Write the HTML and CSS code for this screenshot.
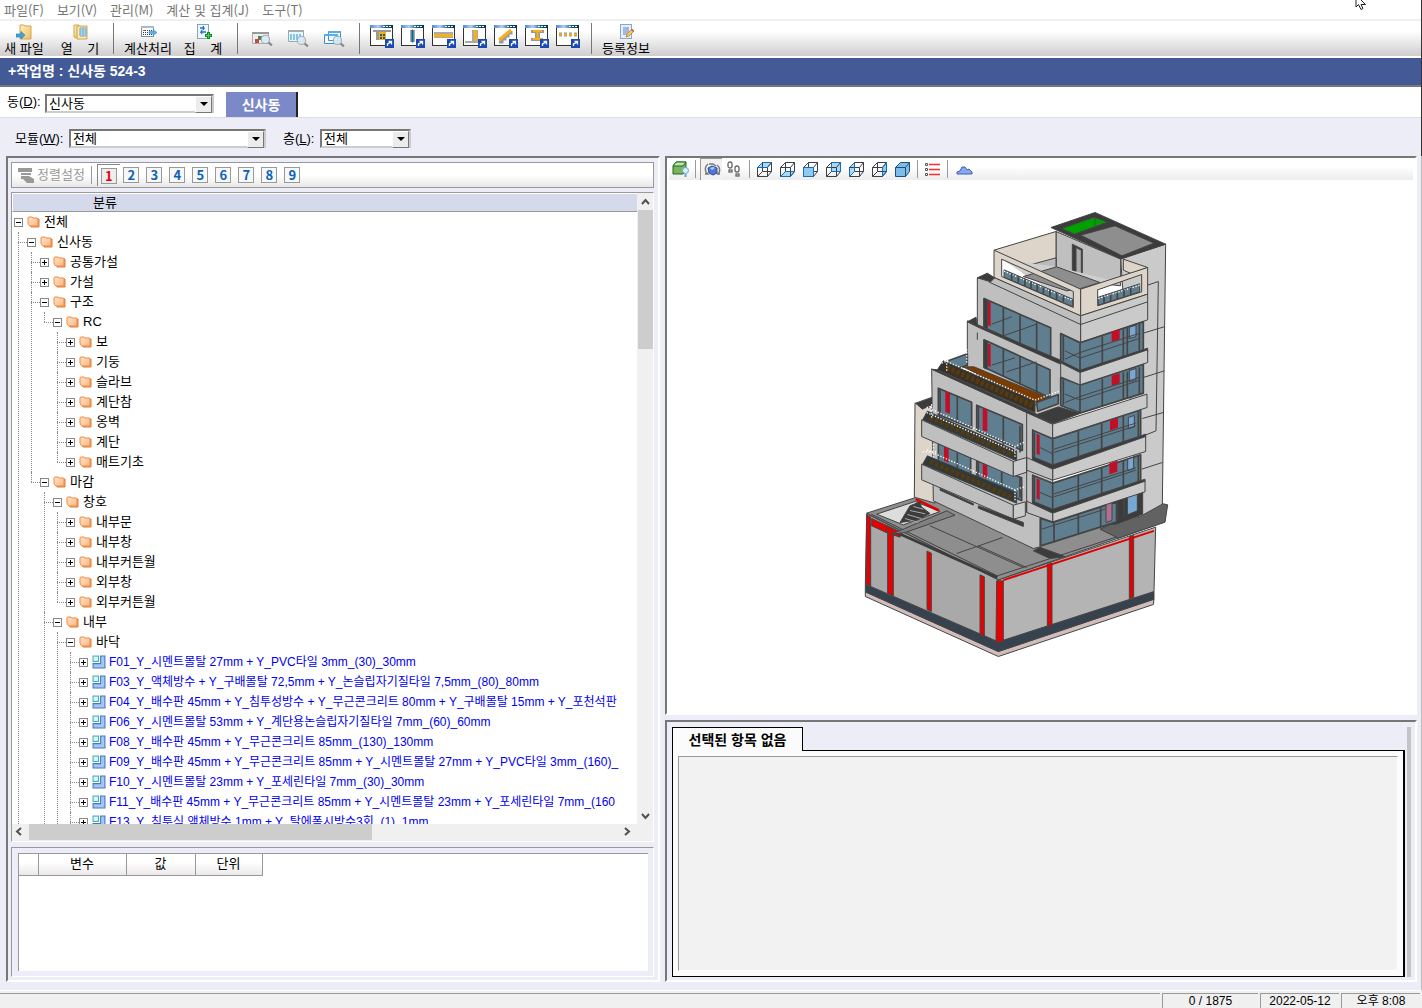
FILE: index.html
```html
<!DOCTYPE html>
<html lang="ko">
<head>
<meta charset="utf-8">
<title>신사동 524-3</title>
<link rel="stylesheet" href="styles.css">
</head>
<body>
<svg class="defs" aria-hidden="true">
  <defs>
    <linearGradient id="gFolder" x1="0" y1="0" x2="1" y2="1"><stop offset="0" stop-color="#ffe3cc"/><stop offset="1" stop-color="#fbb884"/></linearGradient>
    <linearGradient id="gYellow" x1="0" y1="0" x2="1" y2="1"><stop offset="0" stop-color="#fff0c0"/><stop offset="1" stop-color="#ecc068"/></linearGradient>
    <linearGradient id="gCap" x1="0" x2="1"><stop offset="0" stop-color="#4f86d8"/><stop offset=".35" stop-color="#b4cdf2"/><stop offset=".7" stop-color="#0d5878"/><stop offset="1" stop-color="#063346"/></linearGradient>
    <symbol id="folder" viewBox="0 0 14 14"><path d="M3 4h9v8H4z" fill="#f5a56a" stroke="#dc7d3a"/><path d="M1 3q0-1 1-1h3l1 1h4q1 0 1 1v7H3Q1 10 1 8z" fill="url(#gFolder)" stroke="#f08b40"/></symbol>
    <symbol id="part" viewBox="0 0 13 13"><path d="M8 1h4v11H1V8h7z" fill="#a9c6f2" stroke="#3f78c4"/><rect x="1" y="1" width="5" height="5" fill="#dff6f6" stroke="#3fb3bd"/></symbol>
    <symbol id="lens" viewBox="0 0 12 12"><path d="M7 7l4 3.500" stroke="#888" stroke-width="2"/><circle cx="5" cy="5" r="3.800" fill="#d8eaf4" fill-opacity=".9" stroke="#a5acb2"/></symbol>
    <symbol id="win" viewBox="0 0 24 24"><rect x=".5" y="1.500" width="22" height="20" fill="#fff" stroke="#333"/><rect x="0" y="1" width="23" height="3" fill="url(#gCap)"/><path d="M13 2.500h2m1 0h2m1 0h2" stroke="#fff"/></symbol>
    <symbol id="link" viewBox="0 0 9 9"><rect width="9" height="9" fill="#1b49b5"/><path d="M2.500 7V5l4-2M3.500 2.500h3v3" fill="none" stroke="#fff" stroke-width="1.300"/></symbol>
    <symbol id="cube" viewBox="0 0 17 17"><path d="M1.500 6.500h10v9h-10zM6.500 1.500h9v9h-9zM1.500 6.500l5-5M11.500 6.500l4-5M11.500 15.500l4-5M1.500 15.500l5-5" fill="none" stroke="#3a3f45"/></symbol>
  </defs>
</svg>
<div class="app">
  <header class="top">
    <nav class="menu">
      <a href="#">파일(F)</a><a href="#">보기(V)</a><a href="#">관리(M)</a><a href="#">계산 및 집계(J)</a><a href="#">도구(T)</a>
      <svg class="cursor" width="14" height="11" viewBox="0 0 14 11"><path d="M1 0v7l2.500-2.500L6 9.500l2-1-2-4h4.500L6 0" fill="#fff" stroke="#222"/></svg>
    </nav>
    <div class="toolbar">
      <button class="tool w40"><svg width="17" height="18" viewBox="0 0 17 18"><path d="M4 2h4l1 1h6v13H4z" fill="url(#gYellow)" stroke="#d1a44e"/><path d="M0 11h5V8.500l4 3.800-4 3.700v-2H0z" fill="#43a5e0" stroke="#1d74b5" stroke-width=".6"/></svg>새 파일</button>
      <button class="tool w40 second"><svg width="17" height="18" viewBox="0 0 17 18"><path d="M2 2h5v14l-5-2z" fill="url(#gYellow)" stroke="#d1a44e"/><path d="M5 3h10v13H5z" fill="#ffe7a8" stroke="#d1a44e"/><path d="M8 5h6v8H8z" fill="#fff" stroke="#63a8cf"/><path d="M8 7h6M8 9h6M8 11h6M11 5v8" stroke="#63a8cf"/></svg><span>열&nbsp;&nbsp;&nbsp;&nbsp;기</span></button>
      <i class="sep s-file"></i>
      <button class="tool w48"><svg width="17" height="18" viewBox="0 0 17 18"><rect x="1.500" y="3.500" width="12" height="10" fill="#fff" stroke="#8493a0"/><rect x="1" y="3" width="13" height="2" fill="#a8bccb"/><path d="M3 7.500h9M3 9.500h9M3 11.500h9" stroke="#2d3d58" stroke-dasharray="1 1"/><path d="M3 7.500h2" stroke="#e33"/><path d="M9 8.500h4V6.500l4 3-4 3v-2H9z" fill="#55b2ea" stroke="#2680bd" stroke-width=".5"/></svg>계산처리</button>
      <button class="tool w48 last"><svg width="17" height="18" viewBox="0 0 17 18"><rect x="2.500" y="1.500" width="11" height="14" fill="#f1f7fc" stroke="#87a4bd"/><path d="M5 5h4L8 3m1 2L8 7M11 9H6l1-2M6 9l1 2" fill="none" stroke="#1f6fd0" stroke-width="1.300"/><path d="M10 12.500h7M13.500 9v7" stroke="#108a24" stroke-width="3"/><path d="M11 12.500h5M13.500 10v5" stroke="#4bd355"/></svg><span>집&nbsp;&nbsp;&nbsp;&nbsp;계</span></button>
      <i class="sep s-calc"></i>
      <button class="pic"><svg width="21" height="20" viewBox="0 0 21 20"><path d="M.5 4.500h16v11H.5z" fill="#eee" stroke="#aaa"/><path d="M0 4h17v2H0z" fill="#999"/><path d="M6 8h4v4H6z" fill="#3e8a50"/><path d="M3 11h4v4H3z" fill="#c44"/><use href="#lens" x="8" y="6" width="13" height="13"/></svg></button>
      <button class="pic"><svg width="21" height="20" viewBox="0 0 21 20"><path d="M.5 2.500h15v11H.5z" fill="#eaf6fc" stroke="#9aa"/><path d="M0 2h16v2H0z" fill="#aaa"/><path d="M2 7h12M2 9h12M2 11h10" stroke="#55b9e6" stroke-width="1.500" stroke-dasharray="2 1"/><use href="#lens" x="8" y="7" width="13" height="13"/></svg></button>
      <button class="pic"><svg width="21" height="20" viewBox="0 0 21 20"><path d="M4.500 3.500h12v9h-12zM.5 6.500h13v9H.5z" fill="#f3f9fd" stroke="#4190c5"/><path d="M4 3h13v2H4zM0 6h14v2H0z" fill="#55b0e4"/><use href="#lens" x="8" y="7" width="13" height="13"/></svg></button>
      <i class="sep s-find"></i>
      <button class="shape"><svg width="24" height="24"><use href="#win"/><path d="M3 6h18v2H3zM6 8h3v8H6z" fill="#999"/><path d="M9 8h7v8H9z" fill="#f9b018"/><path d="M10 10h2v2h-2zM13 10h2v2h-2zM10 13h2v2h-2zM13 13h2v2h-2z" fill="#17606e"/><use href="#link" x="15" y="15" width="9" height="9"/></svg></button>
      <button class="shape"><svg width="24" height="24"><use href="#win"/><path d="M9 6h5v12H9z" fill="#aaa"/><path d="M11 6h1v12h-1z" fill="#046b96" stroke="#046b96"/><use href="#link" x="15" y="15" width="9" height="9"/></svg></button>
      <button class="shape"><svg width="24" height="24"><use href="#win"/><path d="M2 8h19v6H2z" fill="#aaa"/><path d="M2 10h19v3H2z" fill="#f9b018"/><use href="#link" x="15" y="15" width="9" height="9"/></svg></button>
      <button class="shape"><svg width="24" height="24"><use href="#win"/><path d="M2 17h15v2H2zM9 6h6v11H9z" fill="#aaa"/><path d="M11 6h3v11h-3z" fill="#f9b018"/><use href="#link" x="15" y="15" width="9" height="9"/></svg></button>
      <button class="shape"><svg width="24" height="24"><use href="#win"/><path d="M5 18h3v-3h3v-3h3V9h3V7" stroke="#999" stroke-width="3" fill="none"/><path d="M5 16L17 6" stroke="#f9b018" stroke-width="3"/><use href="#link" x="15" y="15" width="9" height="9"/></svg></button>
      <button class="shape"><svg width="24" height="24"><use href="#win"/><path d="M6 6h13v3h-4v5h3v3H6v-3h4V9H6z" fill="#999"/><path d="M8 7h9M8 15h9M12.500 7v8" stroke="#f9b018" stroke-width="2"/><use href="#link" x="15" y="15" width="9" height="9"/></svg></button>
      <button class="shape"><svg width="24" height="24"><use href="#win"/><path d="M3 10.500h18" stroke="#999" stroke-width="4" stroke-dasharray="3 2"/><path d="M3 10.500h18" stroke="#f9b018" stroke-width="2" stroke-dasharray="3 2"/><use href="#link" x="15" y="15" width="9" height="9"/></svg></button>
      <i class="sep s-shape"></i>
      <button class="tool w48"><svg width="17" height="18" viewBox="0 0 17 18"><rect x="2.500" y="1.500" width="11" height="14" fill="#e4effa" stroke="#8aa9c8"/><path d="M5 5h6M5 7h6M5 9h6M5 11h4" stroke="#5a82c4"/><path d="M8 14l1-3 5-5 2 2-5 5z" fill="#f5c95a" stroke="#9c7a30" stroke-width=".7"/><path d="M13 7l2 2 1-1-2-2z" fill="#e44"/></svg>등록정보</button>
    </div>
    <h1 class="title">+작업명 : 신사동 524-3</h1>
    <div class="siteRow">
      <label for="dong">동(<u>D</u>):</label>
      <span class="combo"><select id="dong" class="w169"><option>신사동</option></select></span>
      <button class="siteTab">신사동</button>
    </div>
    <div class="filterRow">
      <label for="module">모듈(<u>W</u>):</label>
      <span class="combo"><select id="module" class="w197"><option>전체</option></select></span>
      <label for="level" class="gapL">층(<u>L</u>):</label>
      <span class="combo"><select id="level" class="w91"><option>전체</option></select></span>
    </div>
  </header>

  <main class="work">
    <section class="panel left">
      <div class="levels">
        <button class="sort" disabled><svg width="17" height="17" viewBox="0 0 17 17"><path d="M0 1h14v4H0zM3 6h10v2H3zM6 9h5l5 3v4H9l-4-4H3V9z" fill="#999"/></svg>정렬설정</button>
        <i class="bar"></i>
        <button class="num on"><b>1</b></button><button class="num"><b>2</b></button><button class="num"><b>3</b></button><button class="num"><b>4</b></button><button class="num"><b>5</b></button><button class="num"><b>6</b></button><button class="num"><b>7</b></button><button class="num"><b>8</b></button><button class="num"><b>9</b></button>
      </div>
      <div class="treeBox">
        <div class="treeHead">분류</div>
        <div class="tree">
          <ul>
            <li><div class="row"><i class="ex minus"></i><svg class="ico"><use href="#folder"/></svg>전체</div>
              <ul>
                <li class="continues"><div class="row"><i class="ex minus"></i><svg class="ico"><use href="#folder"/></svg>신사동</div>
                  <ul>
                    <li><div class="row"><i class="ex"></i><svg class="ico"><use href="#folder"/></svg>공통가설</div></li>
                    <li><div class="row"><i class="ex"></i><svg class="ico"><use href="#folder"/></svg>가설</div></li>
                    <li><div class="row"><i class="ex minus"></i><svg class="ico"><use href="#folder"/></svg>구조</div>
                      <ul>
                        <li><div class="row"><i class="ex minus"></i><svg class="ico"><use href="#folder"/></svg>RC</div>
                          <ul>
                            <li><div class="row"><i class="ex"></i><svg class="ico"><use href="#folder"/></svg>보</div></li>
                            <li><div class="row"><i class="ex"></i><svg class="ico"><use href="#folder"/></svg>기둥</div></li>
                            <li><div class="row"><i class="ex"></i><svg class="ico"><use href="#folder"/></svg>슬라브</div></li>
                            <li><div class="row"><i class="ex"></i><svg class="ico"><use href="#folder"/></svg>계단참</div></li>
                            <li><div class="row"><i class="ex"></i><svg class="ico"><use href="#folder"/></svg>옹벽</div></li>
                            <li><div class="row"><i class="ex"></i><svg class="ico"><use href="#folder"/></svg>계단</div></li>
                            <li><div class="row"><i class="ex"></i><svg class="ico"><use href="#folder"/></svg>매트기초</div></li>
                          </ul>
                        </li>
                      </ul>
                    </li>
                    <li><div class="row"><i class="ex minus"></i><svg class="ico"><use href="#folder"/></svg>마감</div>
                      <ul>
                        <li><div class="row"><i class="ex minus"></i><svg class="ico"><use href="#folder"/></svg>창호</div>
                          <ul>
                            <li><div class="row"><i class="ex"></i><svg class="ico"><use href="#folder"/></svg>내부문</div></li>
                            <li><div class="row"><i class="ex"></i><svg class="ico"><use href="#folder"/></svg>내부창</div></li>
                            <li><div class="row"><i class="ex"></i><svg class="ico"><use href="#folder"/></svg>내부커튼월</div></li>
                            <li><div class="row"><i class="ex"></i><svg class="ico"><use href="#folder"/></svg>외부창</div></li>
                            <li><div class="row"><i class="ex"></i><svg class="ico"><use href="#folder"/></svg>외부커튼월</div></li>
                          </ul>
                        </li>
                        <li class="continues"><div class="row"><i class="ex minus"></i><svg class="ico"><use href="#folder"/></svg>내부</div>
                          <ul>
                            <li class="continues"><div class="row"><i class="ex minus"></i><svg class="ico"><use href="#folder"/></svg>바닥</div>
                              <ul class="items">
                                <li><div class="row"><i class="ex"></i><svg class="ico"><use href="#part"/></svg>F01_Y_시멘트몰탈 27mm + Y_PVC타일 3mm_(30)_30mm</div></li>
                                <li><div class="row"><i class="ex"></i><svg class="ico"><use href="#part"/></svg>F03_Y_액체방수 + Y_구배몰탈 72,5mm + Y_논슬립자기질타일 7,5mm_(80)_80mm</div></li>
                                <li><div class="row"><i class="ex"></i><svg class="ico"><use href="#part"/></svg>F04_Y_배수판 45mm + Y_침투성방수 + Y_무근콘크리트 80mm + Y_구배몰탈 15mm + Y_포천석판</div></li>
                                <li><div class="row"><i class="ex"></i><svg class="ico"><use href="#part"/></svg>F06_Y_시멘트몰탈 53mm + Y_계단용논슬립자기질타일 7mm_(60)_60mm</div></li>
                                <li><div class="row"><i class="ex"></i><svg class="ico"><use href="#part"/></svg>F08_Y_배수판 45mm + Y_무근콘크리트 85mm_(130)_130mm</div></li>
                                <li><div class="row"><i class="ex"></i><svg class="ico"><use href="#part"/></svg>F09_Y_배수판 45mm + Y_무근콘크리트 85mm + Y_시멘트몰탈 27mm + Y_PVC타일 3mm_(160)_</div></li>
                                <li><div class="row"><i class="ex"></i><svg class="ico"><use href="#part"/></svg>F10_Y_시멘트몰탈 23mm + Y_포세린타일 7mm_(30)_30mm</div></li>
                                <li><div class="row"><i class="ex"></i><svg class="ico"><use href="#part"/></svg>F11_Y_배수판 45mm + Y_무근콘크리트 85mm + Y_시멘트몰탈 23mm + Y_포세린타일 7mm_(160</div></li>
                                <li class="continues"><div class="row"><i class="ex"></i><svg class="ico"><use href="#part"/></svg>F13_Y_침투식 액체방수 1mm + Y_탈에폭시방수3회_(1)_1mm</div></li>
                              </ul>
                            </li>
                          </ul>
                        </li>
                      </ul>
                    </li>
                  </ul>
                </li>
              </ul>
            </li>
          </ul>
        </div>
        <div class="vbar"><svg width="15" height="17"><path d="M4 11l3.500-4L11 11" class="chev"/></svg><i class="thumb"></i><svg width="15" height="16"><path d="M4 6l3.500 4L11 6" class="chev"/></svg></div>
        <div class="hbar"><svg width="17" height="15"><path d="M9 4L5 7.500 9 11" class="chev"/></svg><i class="thumb"></i><svg width="16" height="15"><path d="M5 4l4 3.500L5 11" class="chev"/></svg></div>
      </div>
      <div class="varsBox">
        <div class="varsArea">
          <table><thead><tr><th class="c1"></th><th class="c2">변수</th><th class="c3">값</th><th class="c4">단위</th></tr></thead></table>
        </div>
      </div>
    </section>

    <div class="right">
      <section class="panel viewer">
        <div class="viewTools">
          <button><svg width="17" height="17"><path d="M1 5l3-4h10v9l-3 3H1z" fill="#7db45e" stroke="#1c6b1c"/><path d="M1 5h10l3-4H4z" fill="#c2e3b2" stroke="#1c6b1c"/><circle cx="13.500" cy="9.500" r="3" fill="#d6eeff" stroke="#6aa5d8"/><path d="M13.500 13v3" stroke="#6aa5d8" stroke-width="2"/></svg></button>
          <i class="bar"></i>
          <button class="down"><svg width="17" height="17"><path d="M4 3Q0 6 2 11l2 2H1M13 4q4 3 2 8l-2 1h3M5 3h4l3 2" fill="none" stroke="#777" stroke-width="1.400"/><path d="M4 7l4-2 5 2v5l-4 2-4-2z" fill="#4f78d4" stroke="#2a4ba2"/><path d="M6 7l3-1 2 1-3 2z" fill="#bcd0fa"/></svg></button>
          <button><svg width="17" height="17" fill="#fff" stroke="#666" stroke-width="1.300"><rect x="2" y="1" width="4" height="6" rx="2"/><rect x="3" y="9" width="3" height="2"/><rect x="9" y="5" width="4" height="6" rx="2"/><rect x="10" y="13" width="3" height="2"/></svg></button>
          <i class="bar"></i>
          <button><svg width="17" height="17"><path d="M1.500 6.500l5-5h9l-4 5z" fill="#a9d8f8"/><use href="#cube"/><path d="M1.500 6.500l5-5h9l-4 5z" class="hot"/></svg></button>
          <button><svg width="17" height="17"><path d="M1.500 15.500l5-5h9l-4 5z" fill="#a9d8f8"/><use href="#cube"/><path d="M1.500 15.500l5-5h9l-4 5z" class="hot"/></svg></button>
          <button><svg width="17" height="17"><use href="#cube"/><path d="M1.500 6.500h10v9h-10z" fill="#8fcaf0" class="hotFill"/></svg></button>
          <button><svg width="17" height="17"><path d="M6.500 1.500h9v9h-9z" fill="#a9d8f8"/><use href="#cube"/><path d="M6.500 1.500h9v9h-9z" class="hot"/></svg></button>
          <button><svg width="17" height="17"><path d="M1.500 6.500l5-5v9l-5 5z" fill="#a9d8f8"/><use href="#cube"/><path d="M1.500 6.500l5-5v9l-5 5z" class="hot"/></svg></button>
          <button><svg width="17" height="17"><path d="M11.500 6.500l4-5v9l-4 5z" fill="#8fcaf0"/><use href="#cube"/><path d="M11.500 6.500l4-5v9l-4 5z" class="hot"/></svg></button>
          <button><svg width="17" height="17"><path d="M1.500 6.500l5-5h9v9l-4 5h-10z" fill="#7fbce8" stroke="#1d4f7c"/><path d="M1.500 6.500h10v9M11.500 6.500l4-5" fill="none" stroke="#1d4f7c"/></svg></button>
          <i class="bar"></i>
          <button><svg width="17" height="17"><path d="M5 3.500h11M5 8.500h11M5 13.500h11" stroke="#e33" stroke-width="1.400"/><path d="M1.500 2.500h2v2h-2zM1.500 7.500h2v2h-2zM1.500 12.500h2v2h-2z" fill="#fff" stroke="#555"/></svg></button>
          <i class="bar"></i>
          <button class="cloud"><svg width="17" height="17"><path d="M1 13v-2l3-1 2-4h3l2 3 2-1 3 3v2z" fill="#8aa8ee" stroke="#3a5fc0"/></svg></button>
        </div>
        <div class="canvas">
          <svg class="building" viewBox="0 0 990 1400" role="img" aria-label="3D">
            <g class="edge">
              <!-- basement box -->
              <path class="pink" d="M46 1178L445 1357 912 1200 910 1216 445 1372 46 1192z"/>
              <path class="navy" d="M46 1155L445 1328 912 1177 912 1200 445 1357 46 1178z"/>
              <path class="baseL" d="M50 944L445 1142V1328L46 1155z"/>
              <path class="baseR" d="M445 1142L917 984 912 1177 445 1328z"/>
              <path class="red" d="M50 948l12 6v207l-14-6zM65 958l90 42-5 14-37-12-48-22zM113 980l17 10v200l-17-8zM231 1056l13 6v175l-13-6zM390 1127l13 6v178l-13-6zM440 1145h20v180l-16 5-6-4zM592 1096l14-4v185l-14 5zM838 1013l13-4v185l-13 5z"/>
              <path d="M460 1143L912 995" fill="none" stroke="#e00000" stroke-width="6"/>
              <path class="roof" d="M50 942L197 895 255 885 550 1000 760 965 917 978 445 1142z"/>
              <path class="thin" d="M160 995L310 948M240 980L520 1105M320 1063L458 1015M385 1040L530 1105M570 1045L640 1070M64 945L442 1130 917 975"/>
              <path d="M140 1000L442 1135" fill="none" stroke="#3c3c3c" stroke-width="9"/>
              <path class="dark" d="M570 1045l75 28-45 5-50-23z"/>
              <path d="M125 1005L290 935 315 948 165 1000z" fill="#808080"/>
              <path d="M80 945l115-38 75 30-110 40z" fill="#ddd"/>
              <path d="M197 900l70 34" stroke="#e00000" stroke-width="8"/>
              <path class="dark" d="M150 970l30-50 30-12 4 15 26 20-40 20z"/>
              <path d="M165 958l40 12M172 946l42 12M180 934l46 10M190 922l30 8" stroke="#aaa" fill="none"/>
              <path d="M750 990l180-78 23 5-8 52-140 48z" fill="#626262"/>
              <!-- rear core -->
              <path class="wallR" d="M812 178L947 135 937 915 865 955z"/>
              <path class="thin" d="M893 258l32-11-7 448-42 17M880 402l65-20M880 535l63-20M877 658l63-18M875 810l62-20"/>
              <path class="dark" d="M760 880l118-30v95l-80 30h-38z"/>
              <!-- penthouse -->
              <path class="dark" d="M603 85L735 40 947 135 812 180z"/>
              <path d="M635 88l98-34 40 15-100 36z" fill="#00a000"/>
              <path d="M735 54v26" fill="none"/>
              <path class="roof" d="M692 108l103-28 117 52-96 38z"/>
              <path class="wallL" d="M618 97L812 180V260L730 250 618 205z"/>
              <path class="dark" d="M667 135l30 15v83l-30-11z"/><path d="M678 145l16 8v74l-16-6z" fill="#aaa"/>
              <!-- roof terrace -->
              <path class="beige" d="M432 153L618 97V205L530 228z"/>
              <path d="M530 200l88-24v28l-70 22z" fill="#bbb"/>
              <path d="M455 180L620 203 812 250 692 275 670 320z" fill="#cfcfcf" stroke="none"/>
              <path class="roof" d="M520 232L620 203 750 250 692 268 650 275z"/>
              <path class="beige" d="M820 180l73 25-50 18-23-10z"/>
              <path class="beige" fill-rule="evenodd" d="M432 153L692 270v80L432 235zM455 180v52l215 93v-48z"/>
              <path class="beige" fill-rule="evenodd" d="M692 270L893 205v80L692 350zM743 272v48l132-42v-52z"/>
              <path class="glass rail" d="M462 212l206 88v22l-206-88zM745 294l124-40v24l-124 40z"/>
              <path d="M462 216L668 304M745 298L869 258" stroke="#fff" stroke-dasharray="4 5" stroke-width="4" fill="none"/>
              <path class="mull" d="M485 222v20M505 231v20M525 240v20M543 248v20M562 256v20M580 264v20M600 272v20M620 280v20M640 288v20M762 292v20M782 286v20M802 280v20M822 272v20M842 266v20"/>
              <!-- sixth floor -->
              <path class="wallL" d="M382 236L432 235 692 350V430L632 403V490L382 378z"/>
              <path class="wallR" d="M692 350L893 285V362L692 430z"/>
              <path class="thin" d="M418 235v14L692 376 893 308"/>
              <path class="dark" d="M382 236l30-14 22 14-12 12z"/>
              <path class="glass" d="M402 298l200 88v90L402 385z"/>
              <path class="redD" d="M413 306l9 4v72l-9-4z"/>
              <!-- fifth floor -->
              <path class="wallL" d="M352 365L382 376 632 490 692 640 560 650 352 505z"/>
              <path class="dark" d="M352 368l26-14 4 24 250 105v12L382 383z"/>
              <path class="glass" d="M402 422l198 90v84l-198-92z"/>
              <path class="redD" d="M413 432l9 4v68l-9-4z"/>
              <path class="dark" d="M402 298l10 4v86l-10-4zM402 422l10 4v84l-10-4z"/>
              <path class="mull" d="M460 325v88M510 348v88M560 370v88M460 450v82M510 472v84M560 495v86"/>
              <path class="thin" d="M382 400v22M425 375l60-22M460 410l100-35M425 498l70-22M470 518l90-30"/>
              <!-- upper corner bays -->
              <path class="glass" d="M632 403l58 28v86l-58-30zM690 431l190-63v87l-190 62z"/>
              <path class="glass" d="M632 535l58 22v84l-58-22zM690 557l190-62v87l-190 60z"/>
              <path class="redD" d="M785 398l24-8v30l-24 8zM785 530l24-8v30l-24 8z"/>
              <path d="M838 384l20-6v34l-20 6zM838 514l20-6v34l-20 6z" fill="#79a7d4"/>
              <path class="mull" d="M757 412v82M820 390v84M868 374v80M757 540v82M820 520v80M868 504v80M640 408v78M640 540v78M832 386v84M832 518v80"/>
              <path class="thin" d="M645 455l45 22 180-60M645 480l45-20 180-58M645 585l45 18 180-60M645 610l45-18 180-58"/>
              <path class="dark" d="M632 485l58 28 203-66v10l-203 66-58-28z"/>
              <path class="wallR" d="M690 520l203-68v38l-203 67z"/>
              <path class="wallL" d="M632 491l58 29v37l-58-24z"/>
              <!-- stepped wing -->
              <path class="beige" d="M195 612l60 20v280l-62-18z"/>
              <path class="dark" d="M197 612l50-18v22l-30 14z"/>
              <path class="wallL" d="M245 510L530 640 608 675V968L570 955V1043L550 1048 250 905z"/>
              <path class="glass" d="M280 490l72-26v34l-60 20z"/>
              <path d="M280 485L555 605V640L262 512z" fill="#35322c"/>
              <path d="M338 503h34L605 600l-48 8z" fill="#7a3c00"/>
              <path d="M290 505L555 622" stroke="#5b3a0a" stroke-width="16" stroke-dasharray="10 6" fill="none"/>
              <path d="M275 480L555 603 630 575M275 470l75-24M290 515V475M350 450v40M275 492l20-8" stroke="#fff" stroke-dasharray="4 5" stroke-width="4" fill="none"/>
              <path class="glass" d="M560 610l65-24v28l-62 22z"/>
              <path d="M262 512L560 645 608 675 530 640 245 510z" class="dark"/>
              <path class="dark" d="M555 648l70-25 65 20-80 30z"/>
              <path class="glass" d="M265 567l100 42v78l-100-40zM380 618l137 58v78l-137-60zM265 733l97 42v60l-97-34zM380 784l135 52v68l-135-60z"/>
              <path class="redD" d="M286 576l14 6v62l-14-5zM398 626l14 6v66l-14-5zM282 740l14 6v44l-14-5zM398 792l14 6v40l-14-5z"/>
              <path class="mull" d="M270 570v80M322 590v80M385 620v70M460 652v90M322 760v70M385 786v60M455 815v60M510 680v80M510 835v60"/>
              <!-- balcony railings and parapets -->
              <path d="M232 636L500 755V785L218 662zM232 770L500 880V912L218 795z" fill="#2f3a3c"/>
              <path d="M240 655L490 768M240 788L490 896" stroke="#5b3a0a" stroke-width="14" stroke-dasharray="10 7" fill="none"/>
              <path d="M230 624L495 742 525 728M230 640L495 758M230 752L495 872 525 862M218 758h40M245 615v40M495 742v36M250 735v40M495 872v36" stroke="#fff" stroke-dasharray="4 5" stroke-width="4" fill="none"/>
              <path class="wallL" d="M215 662L490 787V832L215 712zM215 795L490 918V960L215 842z"/>
              <path class="wallR" d="M490 787l40-12v44l-40 13zM490 918l36-10v42l-36 10z"/>
              <path class="dark" d="M270 868l100 45v5l-100-45zM385 920l135 50v12l-135-55z"/>
              <!-- lower corner bays -->
              <path class="glass" d="M548 693l60 26v82l-60-24zM608 719l264-87v84l-264 85z"/>
              <path class="glass" d="M548 828l60 24v82l-60-24zM608 852l264-85v84l-264 83z"/>
              <path class="glass" d="M572 958l36 12 192-62v60l-228 72z"/>
              <path class="redD" d="M560 704l9 4v60l-9-4zM560 838l9 4v60l-9-4zM780 664l24-8v30l-24 8zM778 792l24-8v34l-24 8z"/>
              <path d="M835 655l18-6v34l-18 6zM833 780l18-6v34l-18 6zM832 892l30-12v55l-30 12z" fill="#79a7d4"/>
              <path d="M768 915l18-6v55l-18 6z" fill="#b0708f"/>
              <path class="mull" d="M685 695v84M755 672v84M820 650v84M865 636v80M685 830v84M755 806v84M820 784v84M865 770v80M612 970v60M685 946v60M752 925v60M553 700v74M553 832v74M800 905v60M822 895v60"/>
              <path class="thin" d="M612 760l245-80M612 750l245-78M570 745l40 20M612 893l245-80M612 884l245-78M575 990l190-60M570 880l38 16"/>
              <path class="dark" d="M548 773l60 24 279-92v8l-279 97-60-24zM548 906l60 24 277-90v8l-277 94-60-24z"/>
              <path class="wallR" d="M608 675l283-90v40l-283 92zM608 810l279-98v45l-279 86zM608 942l277-96v32l-277 90z"/>
              <path class="wallL" d="M530 775l78 35v33l-78-30zM530 906l78 36v26l-78-28z"/>
              <path class="thin" d="M530 640v300M548 690v90"/>
            </g>
          </svg>
        </div>
      </section>
      <section class="panel detail">
        <div class="detailMain">
          <button class="detailTab">선택된 항목 없음</button>
          <div class="detailBody"><div class="detailInner"></div></div>
        </div>
        <i class="rail"></i>
      </section>
    </div>
  </main>

  <footer class="status"><span class="grow"></span><span class="s1">0 / 1875</span><span class="s2">2022-05-12</span><span class="s2">오후 8:08</span></footer>
</div>
</body>
</html>
```
FILE: styles.css
```css
* { box-sizing: border-box; }
body {
  margin: 0;
  font: 13px/18px "Liberation Sans", "Noto Sans CJK KR", sans-serif;
  color: #000;
  background: #ededf7;
}
button, select { font: inherit; color: inherit; margin: 0; padding: 0; border: 0; background: none; border-radius: 0; }
svg { display: block; flex: none; }
.defs { position: absolute; width: 0; height: 0; }
.app { display: flex; flex-direction: column; height: 100vh; overflow: hidden; }

.top { flex: none; background: #fff; border-right: 1px solid #333; }
.menu {
  position: relative;
  display: flex;
  gap: 13px;
  height: 21px;
  padding: 1px 4px 0;
  border-bottom: 2px solid #f0f0f0;
  font: 13px/18px "Noto Sans CJK KR", sans-serif;
}
.menu a { color: #777; text-decoration: none; }
.cursor { position: absolute; right: 52px; top: 0; }

.toolbar {
  display: flex;
  height: 37px;
  padding-left: 4px;
  border-bottom: 2px solid #fff;
  background: linear-gradient(#fff 30%, #cfcdcd);
}
.tool {
  display: flex;
  flex-direction: column;
  align-items: center;
  justify-content: flex-start;
  padding-top: 2px;
  font: 13px/13px "Noto Sans CJK KR", sans-serif;
  white-space: nowrap;
}
.w40 { width: 40px; }
.w48 { width: 48px; }
.second { margin-left: 16px; }
.last { margin-left: 7px; }
.sep { flex: none; width: 1px; margin: 2px 10px; background: #777; }
.s-file { margin-left: 13px; }
.s-calc { margin-right: 6px; }
.s-find { margin-left: 7px; }
.s-shape { margin-left: 4px; }
.pic { width: 36px; display: flex; align-items: flex-start; justify-content: center; padding-top: 7px; }
.shape { width: 31px; display: flex; align-items: flex-start; padding-top: 3px; }

.title {
  margin: 0;
  height: 29px;
  padding: 0 8px;
  color: #fff;
  background: #435a96;
  border-bottom: 2px solid #777;
  font: bold 14px/26px "Liberation Sans", "Noto Sans CJK KR", sans-serif;
}
.siteRow { display: flex; align-items: center; height: 31px; padding-left: 7px; border-bottom: 1px solid #ddd; }
.siteRow label { width: 38px; }
.siteRow .combo { margin-top: 2px; }
.siteTab {
  align-self: flex-end;
  width: 72px;
  height: 25px;
  margin-left: 12px;
  color: #fff;
  background: #7b89c8;
  border-right: 2px solid #222;
  font-weight: bold;
  font-size: 14px;
}
.filterRow { display: flex; align-items: center; height: 38px; padding: 3px 0 0 15px; background: #ededf7; }
.filterRow label { width: 54px; }
.filterRow .gapL { width: 37px; margin-left: 17px; }
.combo { position: relative; display: flex; }
.combo select {
  appearance: none;
  height: 19px;
  padding: 0 20px 0 2px;
  line-height: 15px;
  background: #fff;
  border: 2px solid #777;
  border-right-color: #ccc;
  border-bottom-color: #ccc;
}
.combo::before {
  content: "";
  position: absolute;
  right: 2px;
  top: 2px;
  width: 15px;
  height: 15px;
  background: #ececec;
  border: 1px solid #fff;
  border-right-color: #777;
  border-bottom-color: #777;
  pointer-events: none;
}
.combo::after {
  content: "";
  position: absolute;
  right: 6px;
  top: 8px;
  border: 4px solid transparent;
  border-top-color: #000;
  border-bottom: 0;
  pointer-events: none;
}
.w169 { width: 169px; }
.w197 { width: 197px; }
.w91 { width: 91px; }

.work {
  flex: 1;
  min-height: 0;
  display: grid;
  grid-template-columns: 654fr 752fr;
  gap: 5px;
  padding: 0 4px 8px 6px;
  border-right: 1px solid #bbb;
  border-bottom: 1px solid #fff;
}
.panel { border: 2px solid #777; border-right-color: #fff; border-bottom-color: #fff; }
.left { display: flex; flex-direction: column; min-width: 0; min-height: 0; padding: 4px 4px 3px 3px; }
.levels {
  display: flex;
  align-items: center;
  flex: none;
  height: 26px;
  padding-left: 6px;
  border: 1px solid #999;
  background: linear-gradient(#fff 50%, #e8e8e8);
}
.levels .sort { display: flex; align-items: center; gap: 2px; color: #999; font-size: 13px; }
.bar { flex: none; width: 1px; height: 18px; background: #999; }
.levels .bar { margin: 0 5px 0 6px; }
.num { width: 23px; height: 22px; display: flex; align-items: center; justify-content: center; }
.num b {
  width: 16px;
  height: 16px;
  border: 1px solid #999;
  background: #f8f8f8;
  color: #0a62b8;
  font: bold 13px/14px "Noto Sans CJK KR", sans-serif;
}
.num.on { border-left: 1px solid #888; border-top: 1px solid #888; }
.num.on b { color: #e00; background: #eee; }

.treeBox {
  flex: 1;
  min-height: 0;
  display: grid;
  grid-template: 19px 1fr 17px / 1fr 16px;
  margin-top: 4px;
  border: 1px solid #999;
  border-right-color: #fff;
  border-bottom-color: #fff;
}
.treeHead {
  padding-left: 80px;
  line-height: 17px;
  background: #d4daec;
  border-bottom: 1px solid #999;
  border-top: 1px solid #fff;
  border-left: 1px solid #fff;
}
.tree { overflow: hidden; background: #fff; padding-left: 2px; }
.tree ul { list-style: none; margin: 0; padding: 0; }
.tree ul ul { margin-left: 13px; }
.tree li { position: relative; }
.tree ul ul > li::before {
  content: "";
  position: absolute;
  left: -9px;
  top: 0;
  height: 100%;
  border-left: 1px dotted #888;
}
.tree ul ul > li:last-child:not(.continues)::before { height: 10px; }
.tree ul ul > li::after { content: ""; position: absolute; left: -9px; top: 10px; width: 9px; border-top: 1px dotted #888; }
.row { display: flex; align-items: center; height: 20px; white-space: nowrap; }
.ex {
  flex: none;
  width: 9px;
  height: 9px;
  margin: 1px 4px 0 0;
  border: 1px solid #888;
  background: linear-gradient(#000, #000) center / 5px 1px no-repeat, linear-gradient(#000, #000) center / 1px 5px no-repeat, #fff;
  position: relative;
  z-index: 1;
}
.ex.minus { background: linear-gradient(#000, #000) center / 5px 1px no-repeat, #fff; }
.ico { width: 14px; height: 14px; margin-right: 3px; }
.items { color: #0000f0; font-size: 12px; }
.vbar { grid-area: 1 / 2 / 3 / 3; display: flex; flex-direction: column; background: #f0f0f0; padding-left: 1px; }
.vbar svg:last-child { margin-top: auto; }
.vbar .thumb { width: 15px; height: 22%; background: #cdcdcd; }
.hbar { grid-area: 3 / 1 / 4 / 3; display: flex; background: #f0f0f0; padding: 0 17px 1px 0; }
.hbar .thumb { width: 55%; margin-right: auto; background: #cdcdcd; }
.chev { fill: none; stroke: #505050; stroke-width: 2; }

.varsBox { flex: none; height: 130px; margin-top: 5px; padding: 5px 5px 5px 6px; border: 1px solid #999; border-right-color: #fff; border-bottom-color: #fff; }
.varsArea { height: 118px; background: #fff; border: 1px solid #999; border-width: 1px 0 0 1px; }
table { border-collapse: collapse; table-layout: fixed; }
th {
  height: 21px;
  padding: 0;
  font-weight: normal;
  line-height: 18px;
  border: 1px solid #999;
  border-width: 0 1px 1px 0;
  background: linear-gradient(#fff 40%, #ebe8e8);
}
.c1 { width: 19px; }
.c2 { width: 88px; }
.c3 { width: 69px; }
.c4 { width: 67px; }

.right { display: flex; flex-direction: column; min-width: 0; min-height: 0; gap: 5px; }
.viewer { flex: 1; min-height: 0; display: flex; flex-direction: column; background: #fff; }
.viewTools {
  display: flex;
  align-items: center;
  flex: none;
  height: 22px;
  margin: 0 2px;
  padding-left: 2px;
  background: linear-gradient(#fff 40%, #ececec);
}
.viewTools button { width: 23px; padding-left: 1px; }
.viewTools .down { width: 22px; height: 22px; padding-left: 3px; border: 1px solid #999; border-width: 1px 0 0 1px; background: #f2f2f2; }
.viewTools .bar { margin: 0 4px 0 2px; }
.viewTools button + .bar { margin: 0 5px 0 1px; }
.viewTools .bar + .down { margin-left: -1px; }
.viewTools .down + button { margin-left: 3px; }
.viewTools .cloud { margin-left: 2px; }
.hot { fill: none; stroke: #1a6db5; }
.hotFill { stroke: #1a6db5; }
.canvas { flex: 1; min-height: 0; display: flex; justify-content: center; padding: 19px 52px 0 0; }
.building { width: 330px; height: 467px; }
.edge { stroke: #444; stroke-width: 3; stroke-linejoin: round; }
.pink { fill: #cfbcbb; }
.navy { fill: #36434f; }
.baseL { fill: #a9a9a9; }
.baseR { fill: #b4b4b4; }
.red { fill: #e80000; }
.redD { fill: #c01028; stroke: none; }
.roof { fill: #8e8e8e; }
.wallL { fill: #bfbfbf; }
.wallR { fill: #cacaca; }
.beige { fill: #ddd4ca; }
.dark { fill: #3c3c3c; }
.glass { fill: #5f7f90; stroke-width: 5; }
.glass.rail { width: auto; stroke-width: 3; }
.mull { fill: none; stroke-width: 5; }
.thin { fill: none; }

.detail { flex: none; height: 262px; display: flex; gap: 2px; padding: 5px 4px 3px 5px; }
.detailMain { flex: 1; display: flex; flex-direction: column; }
.detailTab {
  position: relative;
  align-self: flex-start;
  width: 131px;
  height: 24px;
  margin-bottom: -1px;
  background: #fbfbfb;
  border: 1px solid #000;
  border-bottom: 0;
  font: bold 14px/20px "Liberation Sans", "Noto Sans CJK KR", sans-serif;
}
.detailBody { flex: 1; padding: 5px; background: #fbfbfb; border: 1px solid #000; border-right-width: 2px; }
.detailInner { height: 100%; background: #f2f2f2; border: 1px solid #999; border-right-color: #fff; border-bottom-color: #fff; }
i.rail { width: 4px; background: #c4c4c4; }

.status { flex: none; display: flex; gap: 2px; height: 17px; padding: 2px 2px 0 0; background: #f0f0f0; font-size: 12px; }
.status span { border: 1px solid #999; border-width: 1px 0 0 1px; text-align: center; line-height: 14px; overflow: hidden; }
.status .grow { flex: 1; border-left: 0; }
.s1 { width: 96px; }
.s2 { width: 79px; }
```
